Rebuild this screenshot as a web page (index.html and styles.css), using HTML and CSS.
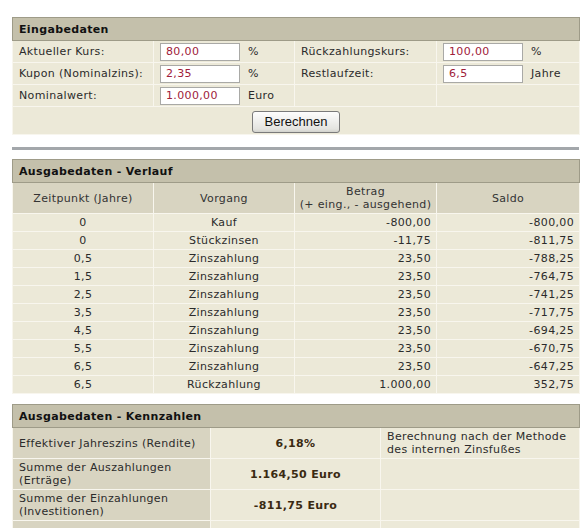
FILE: index.html
```html
<!DOCTYPE html>
<html lang="de">
<head>
<meta charset="utf-8">
<link rel="stylesheet" href="styles.css">
</head>
<body>
<div class="page">
  <table class="box input-box">
    <colgroup><col class="c1"><col class="c2"><col class="c3"><col class="c4"></colgroup>
    <tr><th colspan="4" class="title">Eingabedaten</th></tr>
    <tr>
      <td>Aktueller Kurs:</td>
      <td><span class="field">80,00</span><span class="unit">%</span></td>
      <td>Rückzahlungskurs:</td>
      <td><span class="field">100,00</span><span class="unit">%</span></td>
    </tr>
    <tr>
      <td>Kupon (Nominalzins):</td>
      <td><span class="field">2,35</span><span class="unit">%</span></td>
      <td>Restlaufzeit:</td>
      <td><span class="field">6,5</span><span class="unit">Jahre</span></td>
    </tr>
    <tr>
      <td>Nominalwert:</td>
      <td><span class="field">1.000,00</span><span class="unit">Euro</span></td>
      <td></td>
      <td></td>
    </tr>
    <tr><td colspan="4" class="btn-row"><button class="btn">Berechnen</button></td></tr>
  </table>

  <div class="divider"></div>

  <table class="box verlauf">
    <colgroup><col class="c1"><col class="c2"><col class="c3"><col class="c4"></colgroup>
    <tr><th colspan="4" class="title">Ausgabedaten - Verlauf</th></tr>
    <tr class="colhead">
      <td>Zeitpunkt (Jahre)</td>
      <td>Vorgang</td>
      <td>Betrag<br>(+ eing., - ausgehend)</td>
      <td>Saldo</td>
    </tr>
    <tr><td>0</td><td>Kauf</td><td class="num">-800,00</td><td class="num">-800,00</td></tr>
    <tr><td>0</td><td>Stückzinsen</td><td class="num">-11,75</td><td class="num">-811,75</td></tr>
    <tr><td>0,5</td><td>Zinszahlung</td><td class="num">23,50</td><td class="num">-788,25</td></tr>
    <tr><td>1,5</td><td>Zinszahlung</td><td class="num">23,50</td><td class="num">-764,75</td></tr>
    <tr><td>2,5</td><td>Zinszahlung</td><td class="num">23,50</td><td class="num">-741,25</td></tr>
    <tr><td>3,5</td><td>Zinszahlung</td><td class="num">23,50</td><td class="num">-717,75</td></tr>
    <tr><td>4,5</td><td>Zinszahlung</td><td class="num">23,50</td><td class="num">-694,25</td></tr>
    <tr><td>5,5</td><td>Zinszahlung</td><td class="num">23,50</td><td class="num">-670,75</td></tr>
    <tr><td>6,5</td><td>Zinszahlung</td><td class="num">23,50</td><td class="num">-647,25</td></tr>
    <tr><td>6,5</td><td>Rückzahlung</td><td class="num">1.000,00</td><td class="num">352,75</td></tr>
  </table>

  <table class="box kennzahlen">
    <colgroup><col class="k1"><col class="k2"><col class="k3"></colgroup>
    <tr><th colspan="3" class="title">Ausgabedaten - Kennzahlen</th></tr>
    <tr>
      <td class="lbl">Effektiver Jahreszins (Rendite)</td>
      <td class="val">6,18%</td>
      <td class="note">Berechnung nach der Methode<br>des internen Zinsfußes</td>
    </tr>
    <tr>
      <td class="lbl">Summe der Auszahlungen<br>(Erträge)</td>
      <td class="val">1.164,50 Euro</td>
      <td class="note"></td>
    </tr>
    <tr>
      <td class="lbl">Summe der Einzahlungen<br>(Investitionen)</td>
      <td class="val">-811,75 Euro</td>
      <td class="note"></td>
    </tr>
    <tr>
      <td class="lbl">&nbsp;<br>&nbsp;</td>
      <td class="val"></td>
      <td class="note"></td>
    </tr>
  </table>
</div>
</body>
</html>
```

FILE: styles.css
```css
html, body {
  margin: 0;
  padding: 0;
  background: #ffffff;
}
body {
  font-family: "DejaVu Sans", Verdana, sans-serif;
  font-size: 11px;
  letter-spacing: 0.35px;
  color: #2b2b2b;
  overflow: hidden;
}
.page {
  padding: 17px 0 0 12px;
  width: 567px;
}
.box {
  width: 567px;
  table-layout: fixed;
  border-collapse: collapse;
  border: 1px solid #9e9b88;
  background: #ece9d8;
}
.c1 { width: 141px; }
.c2 { width: 141px; }
.c3 { width: 142px; }
.c4 { width: 143px; }
.k1 { width: 198px; }
.k2 { width: 170px; }
.k3 { width: 199px; }
.box td {
  border: 1px solid #f8f6ee;
  padding: 0 6px;
  line-height: 13px;
  white-space: nowrap;
}
.box tr:first-child th {
  border: 1px solid #9e9b88;
}
.title {
  background: #c4c0ab;
  color: #111;
  font-weight: bold;
  text-align: left;
  height: 21px;
  padding: 1px 6px 0;
  line-height: 13px;
}
.input-box td {
  height: 21px;
  line-height: 18px;
}
.field {
  display: inline-block;
  box-sizing: border-box;
  width: 80px;
  height: 18px;
  border: 1px solid #a9a9a6;
  background: #fff;
  color: #a0203a;
  padding: 0 0 0 5px;
  vertical-align: top;
  line-height: 16px;
}
.unit {
  display: inline-block;
  margin-left: 8px;
  vertical-align: top;
}
.input-box td.btn-row {
  text-align: center;
  height: 27px;
  padding: 0;
  line-height: 22px;
}
.btn {
  font-family: "Liberation Sans", Arial, sans-serif;
  font-size: 13px;
  letter-spacing: 0;
  color: #111;
  width: 88px;
  height: 22px;
  border: 1px solid #7a7a7a;
  border-radius: 3px;
  background: linear-gradient(#fdfdfd, #e4e4e0 85%, #d2d2cc);
  padding: 0;
  vertical-align: middle;
  margin-top: 2px;
}
.divider {
  height: 3px;
  background: #a3a7ab;
  margin: 12px 0 9px;
}
.verlauf td {
  height: 17px;
  text-align: center;
  padding: 0 5px;
}
.verlauf .colhead td {
  background: #d8d4c1;
  height: 30px;
  color: #333;
  padding: 0 2px;
}
.verlauf td.num {
  text-align: right;
}
.kennzahlen {
  margin-top: 10px;
}
.kennzahlen td {
  height: 28px;
  vertical-align: middle;
}
.kennzahlen .lbl {
  background: #d8d4c1;
  text-align: left;
}
.kennzahlen .val {
  text-align: center;
  font-weight: bold;
  color: #3a2a12;
}
.kennzahlen .note {
  vertical-align: top;
  padding-top: 2px;
}
```
